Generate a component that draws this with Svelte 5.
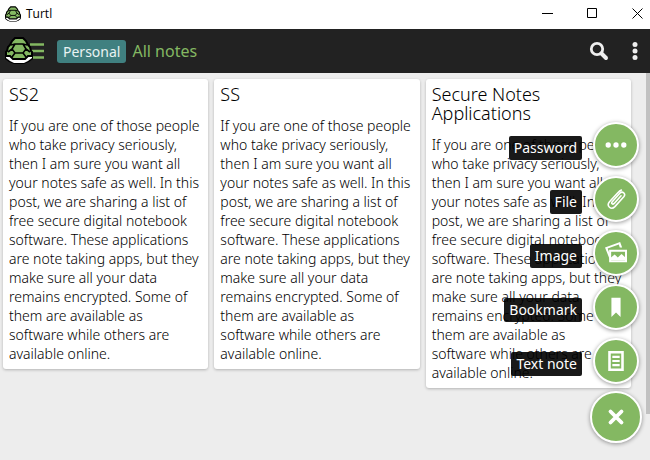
<script>
  const body =
    'If you are one of those people who take privacy seriously, then I am sure you want all your notes safe as well. In this post, we are sharing a list of free secure digital notebook software. These applications are note taking apps, but they make sure all your data remains encrypted. Some of them are available as software\u00a0while others are available online.';
  const notes = ['SS2', 'SS', 'Secure Notes Applications'];
  const actions = ['Password', 'File', 'Image', 'Bookmark', 'Text note'];
</script>

{#snippet turtle()}
  <path d="M0 18h28v4l-4 3-5 2h-10l-5-2-4-3z" fill="#000" />
  <path d="M1 19h26v2l-4 3-4 2h-10l-4-2-4-3z" fill="#fff" />
  <path d="M10 1h8l3 3 2 4 2 2 1 4 1 1v4h-4l-3 3h-12l-3-3h-4v-4l1-1 1-4 2-2 2-4z" fill="#84b862" stroke="#000" stroke-width="2" />
  <path d="M6 8l4-1h8l4 1M10 7l-3 5 3 4h8l3-4-3-5M7 12l-4 3M21 12l4 3M10 16l-3 4M18 16l3 4" fill="none" stroke="#000" stroke-width="1.600" />
{/snippet}

<div class="app">
  <div class="titlebar">
    <svg class="logo" viewBox="0 0 28 27" aria-hidden="true">{@render turtle()}</svg>
    <span class="name">Turtl</span>
    <button aria-label="Minimize"><svg viewBox="0 0 11 11"><path d="M0 5.5h11" /></svg></button>
    <button aria-label="Maximize"><svg viewBox="0 0 11 11"><path d="M.5 .5h9v9h-9z" /></svg></button>
    <button aria-label="Close"><svg viewBox="0 0 11 11"><path d="M.5 .5l10 10M10.500 .5l-10 10" /></svg></button>
  </div>

  <header>
    <button class="menu" aria-label="Open menu">
      <svg viewBox="0 0 40 28" aria-hidden="true">
        <path d="M25 7.500h14M25 14h14M25 20.500h14" stroke="#84b862" stroke-width="2.600" />
        {@render turtle()}
      </svg>
    </button>
    <a class="space" href="#personal">Personal</a>
    <h1>All notes</h1>
    <button class="search" aria-label="Search">
      <svg viewBox="0 0 20 20"><circle cx="8" cy="8" r="5.700" /><path d="M12.500 12.500l4.500 4.500" stroke-width="4" stroke-linecap="round" /></svg>
    </button>
    <button class="more" aria-label="More options">
      <svg viewBox="0 0 6 20"><circle cx="3" cy="3.500" r="2.500" /><circle cx="3" cy="10" r="2.500" /><circle cx="3" cy="16.500" r="2.500" /></svg>
    </button>
  </header>

  <main>
    <div class="notes">
      {#each notes as title}
        <article>
          <h2>{title}</h2>
          <p>{body}</p>
        </article>
      {/each}
    </div>
    <div class="track"><div class="thumb"></div></div>
  </main>

  <div class="actions">
    {#each actions as action, i}
      <div class="action">
        <label for="add-{i}">{action}</label>
        <button id="add-{i}">
          <svg viewBox="0 0 24 24" aria-hidden="true">
            {#if action === 'Password'}
              <g fill="#fff"><circle cx="3.500" cy="12" r="2.900" /><circle cx="12" cy="12" r="2.900" /><circle cx="20.500" cy="12" r="2.900" /></g>
            {:else if action === 'File'}
              <path d="M17.500 8.500l-7.500 8.300c-1.700 1.700-3.700-.1-2.100-1.900l8.300-9.200c2.900-2.900 6.900.6 4.300 3.800l-9.700 10.800c-4.200 4.200-9.700-.6-5.900-5.200l8.800-9.600c1.300-1.400 2.600-2.700 4.200-3.200" fill="none" stroke="#fff" stroke-width="1.700" stroke-linecap="round" />
            {:else if action === 'Image'}
              <path d="M0 6l16.500-6 2.200 6h-2.600l-1-3.200-12.200 4.400 2.300 6v5.800z" fill="#fff" />
              <path fill-rule="evenodd" d="M4.500 8.500h19.500v13.500h-19.500zm2.200 2.200v9.100h15.100v-9.100z" fill="#fff" />
              <path d="M6.500 20v-3l4-3.500 3.500 3.500 4-4 4 3.500v3.500z" fill="#fff" />
            {:else if action === 'Bookmark'}
              <path d="M7 2h10v21l-5-5-5 5z" fill="#fff" />
            {:else}
              <path fill-rule="evenodd" d="M3.500 1h17v22h-17zm2.800 2.800v16.400h11.400v-16.400z" fill="#fff" />
              <path d="M8 7.500h8M8 12h8M8 16.500h8" stroke="#fff" stroke-width="2.200" />
            {/if}
          </svg>
        </button>
      </div>
    {/each}
    <button class="close" aria-label="Close add menu">
      <svg viewBox="0 0 24 24"><path d="M6 6l12 12M18 6l-12 12" stroke="#fff" stroke-width="4.200" stroke-linecap="round" /></svg>
    </button>
  </div>
</div>

<style>
  :global(body) {
    margin: 0;
    background: #ededed;
  }
  .app {
    position: relative;
    display: flex;
    flex-direction: column;
    min-height: 100vh;
    font: 14px/19px "Noto Sans", "Open Sans", sans-serif;
    color: #222;
  }
  button {
    display: flex;
    align-items: center;
    justify-content: center;
    padding: 0;
    border: 0;
    background: none;
    font: inherit;
    cursor: pointer;
  }
  h1, h2, p {
    margin: 0;
    font-weight: 400;
  }
  .titlebar {
    display: flex;
    align-items: center;
    height: 29px;
    padding: 0 7px 2px 5px;
    box-sizing: border-box;
    background: #fff;
    color: #000;
  }
  .logo {
    width: 16px;
    height: 16px;
  }
  .name {
    flex: 1;
    margin-left: 5px;
    font-family: "Open Sans", sans-serif;
    font-size: 12px;
  }
  .titlebar button {
    margin-left: 34px;
  }
  .titlebar button svg {
    width: 11px;
    height: 11px;
    fill: none;
    stroke: #000;
    stroke-width: 1;
  }
  header {
    display: flex;
    align-items: center;
    height: 44px;
    padding: 0 12px 0 5px;
    box-sizing: border-box;
    background: #222;
  }
  .menu > svg {
    width: 40px;
    height: 28px;
  }
  .space {
    margin-left: 12px;
    padding: 2px 6px;
    border-radius: 3px;
    background: #408080;
    color: #e9f3f3;
    text-decoration: none;
  }
  h1 {
    flex: 1;
    margin-left: 6px;
    font-size: 16px;
    color: #84b862;
  }
  .search svg {
    width: 20px;
    height: 20px;
    fill: none;
    stroke: #eee;
    stroke-width: 2.800;
  }
  .more {
    margin-left: 23px;
  }
  .more svg {
    width: 6px;
    height: 20px;
    fill: #eee;
  }
  main {
    flex: 1;
    display: flex;
  }
  .notes {
    flex: 1;
    display: grid;
    grid-template-columns: repeat(3, 1fr);
    align-items: start;
    gap: 6px;
    padding: 6px 15px 6px 3px;
  }
  article {
    padding: 6px;
    border-radius: 3px;
    background: #fff;
    box-shadow: 0 1px 3px rgba(0, 0, 0, 0.25);
    color: #000;
  }
  article h2, article p {
    font-weight: 300;
  }
  h2 {
    margin-bottom: 12px;
    font-size: 18px;
  }
  .track {
    width: 4px;
    background: #ededed;
  }
  .thumb {
    height: 88%;
    background: #c1c1c1;
  }
  .actions {
    position: absolute;
    right: 8px;
    bottom: 17px;
    display: flex;
    flex-direction: column;
    align-items: flex-end;
    gap: 8px;
  }
  .action {
    display: flex;
    align-items: center;
    gap: 11px;
    height: 46px;
    padding-right: 3px;
  }
  .actions .close {
    width: 52px;
    height: 52px;
    margin-top: -1px;
  }
  label {
    margin-top: 5px;
    padding: 2px 5px 3px;
    border-radius: 2px;
    background: rgba(0, 0, 0, 0.9);
    color: #fff;
  }
  .action button {
    width: 46px;
    height: 46px;
  }
  .actions button {
    box-sizing: border-box;
    border: 2px solid #fff;
    border-radius: 50%;
    background: #84b862;
    box-shadow: 0 1px 4px rgba(0, 0, 0, 0.4);
  }
  .actions button svg {
    width: 22px;
    height: 22px;
  }
</style>
